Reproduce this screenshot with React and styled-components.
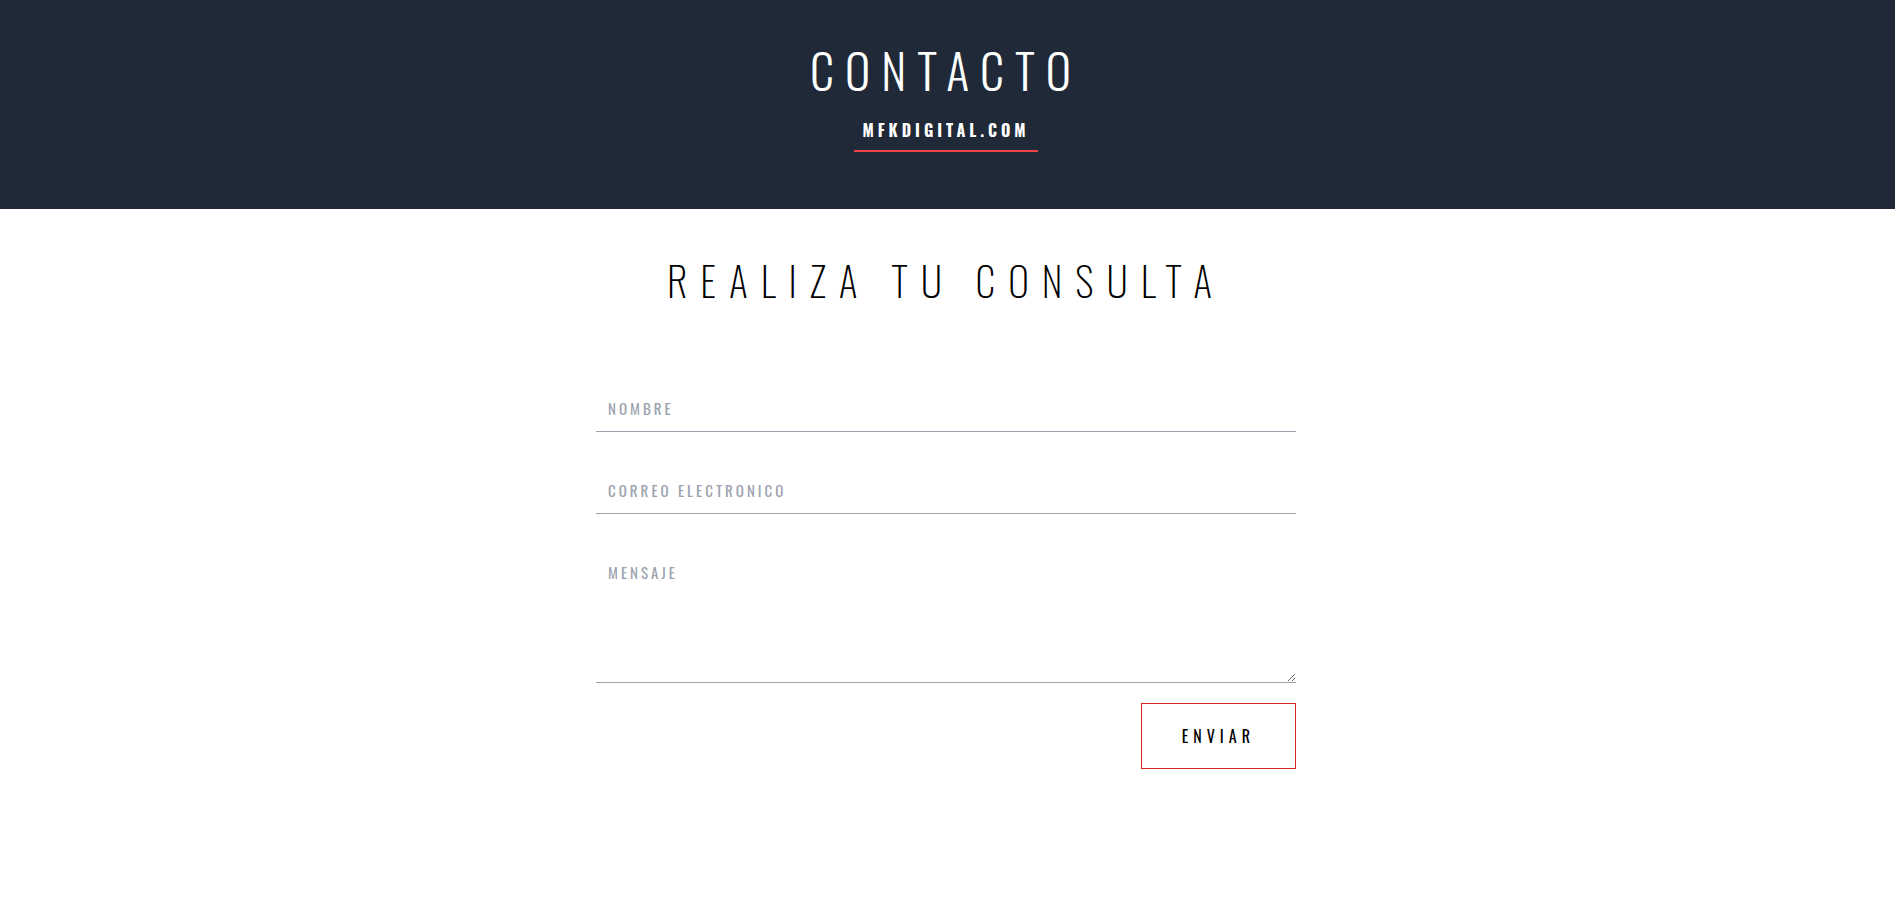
import React from "react";
import styled, { createGlobalStyle } from "styled-components";

const GlobalStyle = createGlobalStyle`
  *, *::before, *::after { box-sizing: border-box; }
  body {
    margin: 0;
    background: #fff;
    color: #000;
    font-family: "Oswald", sans-serif;
  }
`;

const Header = styled.header`
  display: flex;
  flex-direction: column;
  align-items: center;
  gap: 16px;
  padding: 46px 19px 57px 16px;
  background: #1f2937;
  color: #fff;
`;

const Title = styled.h1`
  margin: 0;
  font-size: 48px;
  line-height: 48px;
  font-weight: 300;
  letter-spacing: 11px;
  text-transform: uppercase;
`;

const SiteLink = styled.a`
  padding: 8px;
  border-bottom: 2px solid #ef4444;
  color: inherit;
  font-size: 16px;
  line-height: 24px;
  font-weight: 700;
  letter-spacing: 4px;
  text-decoration: none;
  text-transform: uppercase;
`;

const Main = styled.main`
  display: flex;
  flex-direction: column;
  align-items: center;
  gap: 78px;
  padding: 47px 19px 48px 16px;
`;

const SectionTitle = styled.h2`
  margin: 0;
  font-size: 40px;
  line-height: 48px;
  font-weight: 200;
  letter-spacing: 13px;
  text-align: center;
  text-transform: uppercase;
`;

const Form = styled.form`
  display: flex;
  flex-direction: column;
  gap: 32px;
  width: 100%;
  max-width: 700px;
`;

const Field = styled.input`
  display: block;
  width: 100%;
  height: ${(p) => (p.$height ? `${p.$height}px` : "50px")};
  padding: 14px 12px 11px;
  border: 0;
  border-bottom: 1px solid #9ca3af;
  border-radius: 0;
  background: transparent;
  color: #000;
  font-family: inherit;
  font-size: 15px;
  line-height: 24px;
  font-weight: 400;
  letter-spacing: 3px;
  outline: none;

  &::placeholder {
    color: #9ca3af;
    opacity: 1;
    text-transform: uppercase;
  }
`;

const Actions = styled.div`
  display: flex;
  justify-content: flex-end;
  margin-top: -12px;
`;

const SubmitButton = styled.button`
  padding: 20px 40px;
  border: 1px solid #dc2626;
  background: transparent;
  color: #000;
  font-family: inherit;
  font-size: 16px;
  line-height: 24px;
  font-weight: 400;
  letter-spacing: 5px;
  text-transform: uppercase;
  cursor: pointer;
`;

export default function App() {
  return (
    <>
      <GlobalStyle />
      <Header>
        <Title>Contacto</Title>
        <SiteLink href="#">mfkdigital.com</SiteLink>
      </Header>
      <Main>
        <SectionTitle>Realiza tu consulta</SectionTitle>
        <Form onSubmit={(e) => e.preventDefault()}>
          <Field type="text" name="nombre" aria-label="Nombre" placeholder="Nombre" />
          <Field type="email" name="correo" aria-label="Correo electronico" placeholder="Correo electronico" />
          <Field as="textarea" $height={137} name="mensaje" aria-label="Mensaje" placeholder="Mensaje" />
          <Actions>
            <SubmitButton type="submit">Enviar</SubmitButton>
          </Actions>
        </Form>
      </Main>
    </>
  );
}
